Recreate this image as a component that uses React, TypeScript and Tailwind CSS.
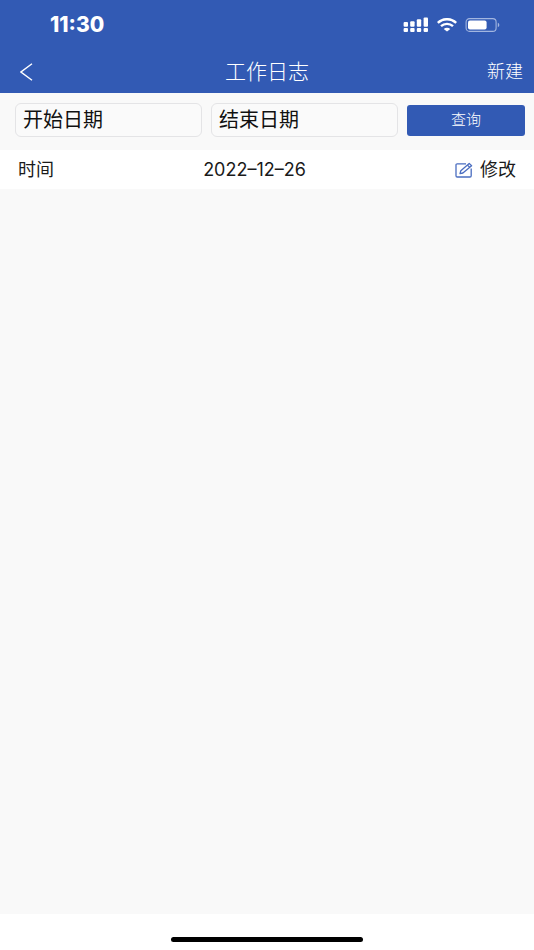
import React, { useState } from 'react';

interface WorkLog {
  id: number;
  date: string;
}

const logs: WorkLog[] = [{ id: 1, date: '2022-12-26' }];

const SignalIcon = () => (
  <svg width="26" height="16" viewBox="0 0 26 16" fill="currentColor" aria-hidden="true">
    <rect x="0.6" y="5" width="4.4" height="4.8" rx="1" />
    <rect x="7.2" y="4.2" width="4.4" height="5.6" rx="1" />
    <rect x="13.8" y="2.2" width="4.4" height="7.6" rx="1" />
    <rect x="20.6" y="0.6" width="4.4" height="9.2" rx="1" />
    <rect x="0.6" y="11" width="4.4" height="4" rx="1" />
    <rect x="7.2" y="11" width="4.4" height="4" rx="1" />
    <rect x="13.8" y="11" width="4.4" height="4" rx="1" />
    <rect x="20.6" y="11" width="4.4" height="4" rx="1" />
  </svg>
);

const WifiIcon = () => (
  <svg width="20" height="14" viewBox="0 0 20 14" fill="none" stroke="currentColor" aria-hidden="true">
    <path d="M0.8 4.9C6 0 14 0 19.2 4.9" strokeWidth="2.5" />
    <path d="M4 8.2C7.3 5.1 12.7 5.1 16 8.2" strokeWidth="2.4" />
    <path d="M10 13.6L6.7 10.9C8.5 9.2 11.5 9.2 13.3 10.9Z" fill="currentColor" stroke="none" />
  </svg>
);

const BatteryIcon = () => (
  <svg width="35" height="14" viewBox="0 0 35 14" fill="none" aria-hidden="true">
    <rect x="1.1" y="0.6" width="30" height="12.8" rx="3.4" stroke="#a3b6e0" strokeWidth="1.1" />
    <rect x="3" y="2.4" width="18.6" height="9.2" rx="2" fill="#ffffff" />
    <path d="M32.8 4.8C34.8 5.5 34.8 8.5 32.8 9.2Z" fill="#a3b6e0" />
  </svg>
);

const EditIcon = () => (
  <svg width="18" height="16" viewBox="0 0 18 16" fill="none" stroke="#4a6dc0" strokeWidth="1.3" strokeLinejoin="round" aria-hidden="true">
    <path d="M11 1.8H2.2Q1 1.8 1 3V13.8Q1 15 2.2 15H15Q16.2 15 16.2 13.8V6.4" />
    <path d="M5 11.6L5.8 8.8L14.2 1.4L16.6 3.8L7.9 11Z" />
    <path d="M12.4 3.1L14.7 5.3" />
  </svg>
);

export default function App() {
  const [startDate, setStartDate] = useState('');
  const [endDate, setEndDate] = useState('');

  const inputClass =
    'h-[34px] min-w-0 flex-1 rounded-md border border-[#e4e4e6] bg-[#fafafa] px-[7px] text-xl text-[#111111] placeholder-[#111111] outline-none';

  return (
    <div className="flex min-h-screen flex-col bg-[#f9f9f9] font-['Inter','Noto_Sans_CJK_SC',sans-serif] text-[#1a1a1a]">
      <header className="bg-[#325ab4] text-white">
        {/* Status bar */}
        <div className="flex h-[50px] items-center justify-between pr-[34px] pl-[50px]">
          <span className="text-[21px] font-extrabold">11:30</span>
          <div className="flex items-center gap-2">
            <SignalIcon />
            <WifiIcon />
            <BatteryIcon />
          </div>
        </div>

        {/* Title bar */}
        <div className="grid h-[43px] grid-cols-[1fr_auto_1fr] items-center px-[11px]">
          <button type="button" aria-label="返回" className="justify-self-start pl-[9px]">
            <svg width="13" height="18" viewBox="0 0 13 18" fill="none" stroke="currentColor" strokeWidth="1.4">
              <path d="M12 0.8L1 9L12 17.2" />
            </svg>
          </button>
          <h1 className="text-[21px] leading-7 font-light">工作日志</h1>
          <button type="button" className="justify-self-end text-lg font-light">新建</button>
        </div>
      </header>

      <main className="flex-1">
        <form className="flex items-center gap-[9px] pt-[10px] pr-[9px] pb-[13px] pl-[15px]" onSubmit={e => e.preventDefault()}>
          <input
            type="text"
            aria-label="开始日期"
            placeholder="开始日期"
            value={startDate}
            onChange={e => setStartDate(e.target.value)}
            className={inputClass}
          />
          <input
            type="text"
            aria-label="结束日期"
            placeholder="结束日期"
            value={endDate}
            onChange={e => setEndDate(e.target.value)}
            className={inputClass}
          />
          <button type="submit" className="h-[31px] w-[118px] rounded-[3px] bg-[#325ab4] text-[15px] font-light text-white">
            查询
          </button>
        </form>

        <ul>
          {logs.map(log => (
            <li key={log.id} className="flex h-[39px] items-center justify-between bg-white px-[18px] text-lg">
              <span>时间</span>
              <time dateTime={log.date}>{log.date.replaceAll('-', '–')}</time>
              <button type="button" className="flex items-center gap-[7px]">
                <EditIcon />
                修改
              </button>
            </li>
          ))}
        </ul>
      </main>

      {/* Home indicator */}
      <footer className="flex h-9 items-end justify-center bg-white pb-2">
        <div className="h-[5px] w-[36%] rounded-full bg-black" />
      </footer>
    </div>
  );
}
